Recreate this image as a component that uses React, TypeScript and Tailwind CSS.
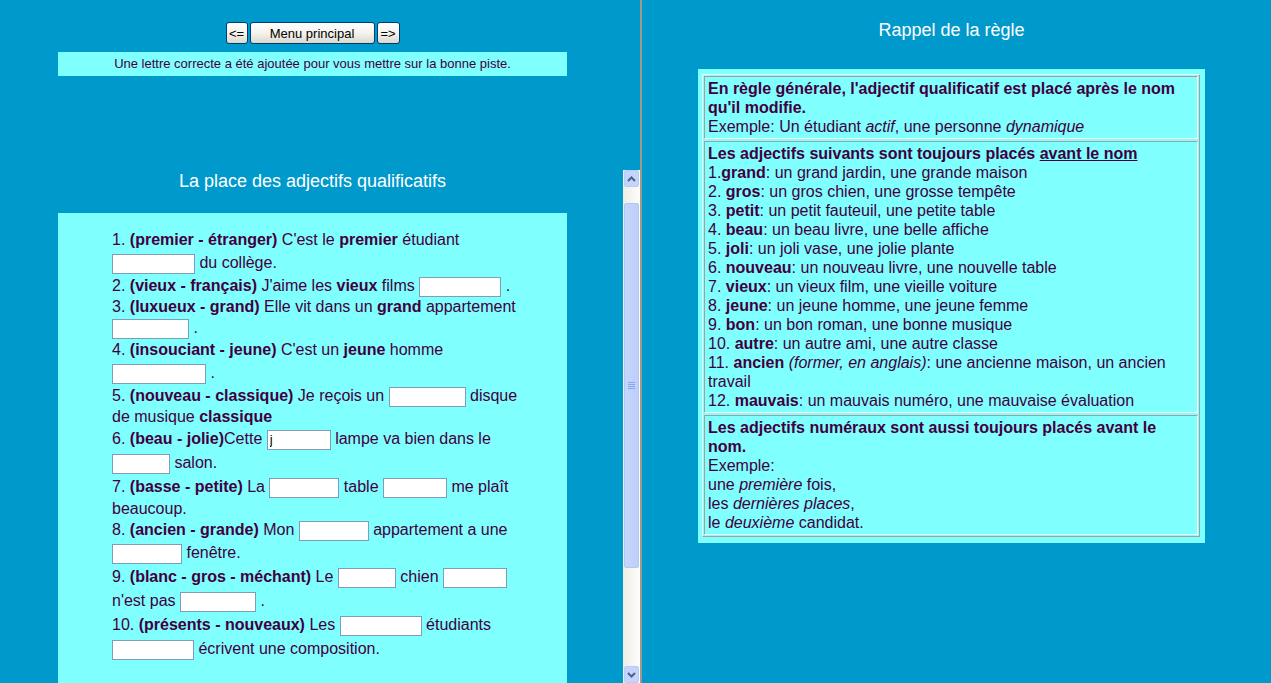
import React from 'react';

const Blank = ({ w, value = '' }: { w: number; value?: string }) => (
  <input
    readOnly
    defaultValue={value}
    style={{ width: w }}
    className="h-[20px] align-middle border border-[#7f9db9] bg-white px-[2px] text-[13px] text-black outline-none"
  />
);

const Line = ({ h, children }: { h: number; children: React.ReactNode }) => (
  <div style={{ height: h, lineHeight: `${h}px` }} className="whitespace-nowrap">
    {children}
  </div>
);

const XpButton = ({ w, children }: { w: number; children: React.ReactNode }) => (
  <button
    style={{ width: w }}
    className="h-[22px] rounded-[3px] border border-[#003c74] bg-gradient-to-b from-white via-[#f4f3ee] to-[#dcd9cc] text-[13px] leading-none text-black"
  >
    {children}
  </button>
);

const Chevron = ({ down = false }: { down?: boolean }) => (
  <svg width="9" height="6" viewBox="0 0 9 6" className={down ? 'rotate-180' : ''}>
    <path d="M1 5 L4.5 1.5 L8 5" fill="none" stroke="#4d6185" strokeWidth="2" />
  </svg>
);

const ScrollBar = () => (
  <div className="w-[17px] h-full flex flex-col bg-gradient-to-r from-[#efede6] to-[#fdfdfb]">
    <div className="h-[17px] mx-[1px] rounded-[2px] border border-[#b8ccf8] bg-[#c4d5fd] flex items-center justify-center">
      <Chevron />
    </div>
    <div className="flex-1 pt-[16px]">
      <div className="h-[365px] mx-[1px] rounded-[2px] border border-[#b2c6f2] bg-gradient-to-r from-[#c6d6fc] to-[#bccffa] flex items-center justify-center">
        <div className="flex flex-col gap-[1px]">
          <div className="w-[7px] h-[1px] bg-[#8aa6ee]" />
          <div className="w-[7px] h-[1px] bg-[#8aa6ee]" />
          <div className="w-[7px] h-[1px] bg-[#8aa6ee]" />
          <div className="w-[7px] h-[1px] bg-[#8aa6ee]" />
        </div>
      </div>
    </div>
    <div className="h-[17px] mx-[1px] rounded-[2px] border border-[#b8ccf8] bg-[#c4d5fd] flex items-center justify-center">
      <Chevron down />
    </div>
  </div>
);

const cell = 'border border-t-[#a0a0a0] border-l-[#a0a0a0] border-r-white border-b-white pl-[3px] pr-[2px] py-[2px]';

export default function App() {
  return (
    <div className="w-[1271px] h-[683px] overflow-hidden flex bg-[#0099cc] text-[#400040] text-[16px] font-['Liberation_Sans',Arial,sans-serif]">
      {/* Left frames */}
      <div className="w-[640px] flex flex-col">
        {/* Top frame: navigation */}
        <div className="h-[170px] w-[623px] flex flex-col items-center pt-[22px] pl-[2px]">
          <div className="flex gap-[2px]">
            <XpButton w={22}>&lt;=</XpButton>
            <XpButton w={125}>Menu principal</XpButton>
            <XpButton w={23}>=&gt;</XpButton>
          </div>
          <div className="mt-[8px] w-[509px] h-[24px] bg-[#80ffff] flex items-center justify-center text-[13px]">
            Une lettre correcte a été ajoutée pour vous mettre sur la bonne piste.
          </div>
        </div>

        {/* Bottom frame: exercise */}
        <div className="flex-1 flex overflow-hidden">
          <div className="w-[623px] flex flex-col items-center pl-[2px]">
            <h2 className="h-[22px] leading-[22px] text-[18px] text-white">La place des adjectifs qualificatifs</h2>
            <div className="mt-[21px] w-[509px] bg-[#80ffff] pt-[16px] pl-[54px] pb-[40px]">
              <Line h={22}>1. <b>(premier - étranger)</b> C'est le <b>premier</b> étudiant</Line>
              <Line h={24}><Blank w={83} /> du collège.</Line>
              <Line h={22}>2. <b>(vieux - français)</b> J'aime les <b>vieux</b> films <Blank w={82} /> .</Line>
              <Line h={20}>3. <b>(luxueux - grand)</b> Elle vit dans un <b>grand</b> appartement</Line>
              <Line h={22}><Blank w={77} /> .</Line>
              <Line h={22}>4. <b>(insouciant - jeune)</b> C'est un <b>jeune</b> homme</Line>
              <Line h={24}><Blank w={94} /> .</Line>
              <Line h={22}>5. <b>(nouveau - classique)</b> Je reçois un <Blank w={77} /> disque</Line>
              <Line h={20}>de musique <b>classique</b></Line>
              <Line h={24}>6. <b>(beau - jolie)</b>Cette <Blank w={64} value="j" /> lampe va bien dans le</Line>
              <Line h={24}><Blank w={58} /> salon.</Line>
              <Line h={24}>7. <b>(basse - petite)</b> La <Blank w={70} /> table <Blank w={64} /> me plaît</Line>
              <Line h={20}>beaucoup.</Line>
              <Line h={22}>8. <b>(ancien - grande)</b> Mon <Blank w={70} /> appartement a une</Line>
              <Line h={24}><Blank w={70} /> fenêtre.</Line>
              <Line h={24}>9. <b>(blanc - gros - méchant)</b> Le <Blank w={58} /> chien <Blank w={64} /></Line>
              <Line h={24}>n'est pas <Blank w={76} /> .</Line>
              <Line h={24}>10. <b>(présents - nouveaux)</b> Les <Blank w={82} /> étudiants</Line>
              <Line h={24}><Blank w={82} /> écrivent une composition.</Line>
            </div>
          </div>
          <ScrollBar />
        </div>
      </div>

      {/* Frame divider */}
      <div className="w-[2px] bg-[#9d9890]" />

      {/* Right frame: rule reminder */}
      <div className="flex-1 flex flex-col items-center pr-[10px] pt-[20px]">
        <h2 className="h-[21px] leading-[21px] text-[18px] text-white">Rappel de la règle</h2>
        <div className="mt-[28px] w-[507px] bg-[#80ffff] pl-[4px] pr-[5px] pt-[5px] pb-[6px]">
          <div className="border border-t-white border-l-white border-r-[#a0a0a0] border-b-[#a0a0a0] p-[1px] flex flex-col gap-[2px] leading-[19px]">
            <div className={cell}>
              <b>En règle générale, l'adjectif qualificatif est placé après le nom qu'il modifie.</b>
              <br />
              Exemple: Un étudiant <i>actif</i>, une personne <i>dynamique</i>
            </div>
            <div className={cell}>
              <b>Les adjectifs suivants sont toujours placés <u>avant le nom</u></b>
              <br />1.<b>grand</b>: un grand jardin, une grande maison
              <br />2. <b>gros</b>: un gros chien, une grosse tempête
              <br />3. <b>petit</b>: un petit fauteuil, une petite table
              <br />4. <b>beau</b>: un beau livre, une belle affiche
              <br />5. <b>joli</b>: un joli vase, une jolie plante
              <br />6. <b>nouveau</b>: un nouveau livre, une nouvelle table
              <br />7. <b>vieux</b>: un vieux film, une vieille voiture
              <br />8. <b>jeune</b>: un jeune homme, une jeune femme
              <br />9. <b>bon</b>: un bon roman, une bonne musique
              <br />10. <b>autre</b>: un autre ami, une autre classe
              <br />11. <b>ancien</b> <i>(former, en anglais)</i>: une ancienne maison, un ancien travail
              <br />12. <b>mauvais</b>: un mauvais numéro, une mauvaise évaluation
            </div>
            <div className={cell}>
              <b>Les adjectifs numéraux sont aussi toujours placés avant le nom.</b>
              <br />Exemple:
              <br />une <i>première</i> fois,
              <br />les <i>dernières places</i>,
              <br />le <i>deuxième</i> candidat.
            </div>
          </div>
        </div>
      </div>
    </div>
  );
}
